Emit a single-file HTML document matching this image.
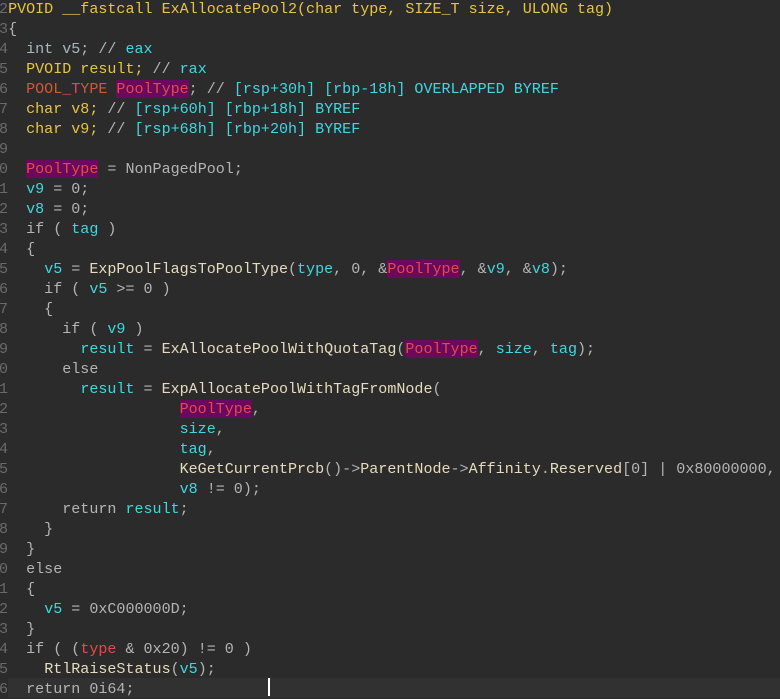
<!DOCTYPE html>
<html><head><style>
body{margin:0;background:#2b2b2b;width:780px;height:698px;overflow:hidden;position:relative}
pre{position:absolute;left:-10px;top:-1px;margin:0;font:15.05px/20px "Liberation Mono",monospace;color:#b4b4b4}
.n{color:#6a6a6a}.y{color:#e8c445}.c{color:#3fd8e2}.f{color:#e6dcbc}.o{color:#d0583a}
.p{background:#6a0a5c;color:#e8484c}.r{color:#e8484c}.g{color:#a9b8b8}
.cur{position:absolute;left:8px;top:678px;width:772px;height:20px;background:#313131}
.caret{position:absolute;left:268px;top:678px;width:2px;height:18px;background:#fff}
</style></head><body>
<div class="cur"></div><div class="caret"></div>
<pre><span class="n">02</span><span class="y">PVOID __fastcall ExAllocatePool2(char type, SIZE_T size, ULONG tag)</span>
<span class="n">03</span>{
<span class="n">04</span>  <span class="g">int v5; // </span><span class="c">eax</span>
<span class="n">05</span>  <span class="y">PVOID result;</span> // <span class="c">rax</span>
<span class="n">06</span>  <span class="o">POOL_TYPE </span><span class="p">PoolType</span>; // <span class="c">[rsp+30h] [rbp-18h] OVERLAPPED BYREF</span>
<span class="n">07</span>  <span class="y">char v8;</span> // <span class="c">[rsp+60h] [rbp+18h] BYREF</span>
<span class="n">08</span>  <span class="y">char v9;</span> // <span class="c">[rsp+68h] [rbp+20h] BYREF</span>
<span class="n">09</span>
<span class="n">10</span>  <span class="p">PoolType</span> = NonPagedPool;
<span class="n">11</span>  <span class="c">v9</span> = 0;
<span class="n">12</span>  <span class="c">v8</span> = 0;
<span class="n">13</span>  if ( <span class="c">tag</span> )
<span class="n">14</span>  {
<span class="n">15</span>    <span class="c">v5</span> = <span class="f">ExpPoolFlagsToPoolType</span>(<span class="c">type</span>, 0, &amp;<span class="p">PoolType</span>, &amp;<span class="c">v9</span>, &amp;<span class="c">v8</span>);
<span class="n">16</span>    if ( <span class="c">v5</span> &gt;= 0 )
<span class="n">17</span>    {
<span class="n">18</span>      if ( <span class="c">v9</span> )
<span class="n">19</span>        <span class="c">result</span> = <span class="f">ExAllocatePoolWithQuotaTag</span>(<span class="p">PoolType</span>, <span class="c">size</span>, <span class="c">tag</span>);
<span class="n">20</span>      else
<span class="n">21</span>        <span class="c">result</span> = <span class="f">ExpAllocatePoolWithTagFromNode</span>(
<span class="n">22</span>                   <span class="p">PoolType</span>,
<span class="n">23</span>                   <span class="c">size</span>,
<span class="n">24</span>                   <span class="c">tag</span>,
<span class="n">25</span>                   <span class="f">KeGetCurrentPrcb</span>()-&gt;<span class="f">ParentNode</span>-&gt;<span class="f">Affinity</span>.<span class="f">Reserved</span>[0] | 0x80000000,
<span class="n">26</span>                   <span class="c">v8</span> != 0);
<span class="n">27</span>      return <span class="c">result</span>;
<span class="n">28</span>    }
<span class="n">29</span>  }
<span class="n">30</span>  else
<span class="n">31</span>  {
<span class="n">32</span>    <span class="c">v5</span> = 0xC000000D;
<span class="n">33</span>  }
<span class="n">34</span>  if ( (<span class="r">type</span> &amp; 0x20) != 0 )
<span class="n">35</span>    <span class="f">RtlRaiseStatus</span>(<span class="c">v5</span>);
<span class="n">36</span>  return 0i64;
</pre>
</body></html>
